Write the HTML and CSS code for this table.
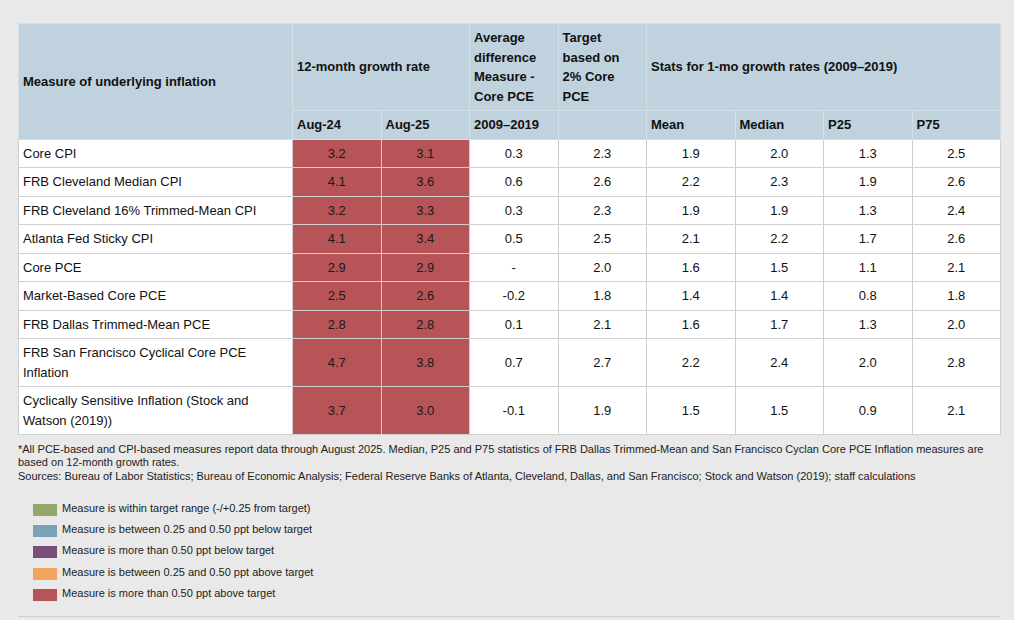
FILE: index.html
```html
<!DOCTYPE html>
<html>
<head>
<meta charset="utf-8">
<link rel="stylesheet" href="styles.css">
</head>
<body>
<div class="page">
  <table class="tbl">
    <colgroup>
      <col class="c-name">
      <col class="c-num"><col class="c-num"><col class="c-num"><col class="c-num">
      <col class="c-num"><col class="c-num"><col class="c-num"><col class="c-num">
    </colgroup>
    <thead>
      <tr>
        <th rowspan="2">Measure of underlying inflation</th>
        <th colspan="2">12-month growth rate</th>
        <th>Average difference Measure - Core PCE</th>
        <th>Target based on 2% Core PCE</th>
        <th colspan="4">Stats for 1-mo growth rates (2009–2019)</th>
      </tr>
      <tr>
        <th>Aug-24</th>
        <th>Aug-25</th>
        <th>2009–2019</th>
        <th></th>
        <th>Mean</th>
        <th>Median</th>
        <th>P25</th>
        <th>P75</th>
      </tr>
    </thead>
    <tbody>
      <tr><td>Core CPI</td><td class="red">3.2</td><td class="red">3.1</td><td>0.3</td><td>2.3</td><td>1.9</td><td>2.0</td><td>1.3</td><td>2.5</td></tr>
      <tr><td>FRB Cleveland Median CPI</td><td class="red">4.1</td><td class="red">3.6</td><td>0.6</td><td>2.6</td><td>2.2</td><td>2.3</td><td>1.9</td><td>2.6</td></tr>
      <tr><td>FRB Cleveland 16% Trimmed-Mean CPI</td><td class="red">3.2</td><td class="red">3.3</td><td>0.3</td><td>2.3</td><td>1.9</td><td>1.9</td><td>1.3</td><td>2.4</td></tr>
      <tr><td>Atlanta Fed Sticky CPI</td><td class="red">4.1</td><td class="red">3.4</td><td>0.5</td><td>2.5</td><td>2.1</td><td>2.2</td><td>1.7</td><td>2.6</td></tr>
      <tr><td>Core PCE</td><td class="red">2.9</td><td class="red">2.9</td><td>-</td><td>2.0</td><td>1.6</td><td>1.5</td><td>1.1</td><td>2.1</td></tr>
      <tr><td>Market-Based Core PCE</td><td class="red">2.5</td><td class="red">2.6</td><td>-0.2</td><td>1.8</td><td>1.4</td><td>1.4</td><td>0.8</td><td>1.8</td></tr>
      <tr><td>FRB Dallas Trimmed-Mean PCE</td><td class="red">2.8</td><td class="red">2.8</td><td>0.1</td><td>2.1</td><td>1.6</td><td>1.7</td><td>1.3</td><td>2.0</td></tr>
      <tr><td>FRB San Francisco Cyclical Core PCE Inflation</td><td class="red">4.7</td><td class="red">3.8</td><td>0.7</td><td>2.7</td><td>2.2</td><td>2.4</td><td>2.0</td><td>2.8</td></tr>
      <tr><td>Cyclically Sensitive Inflation (Stock and Watson (2019))</td><td class="red">3.7</td><td class="red">3.0</td><td>-0.1</td><td>1.9</td><td>1.5</td><td>1.5</td><td>0.9</td><td>2.1</td></tr>
    </tbody>
  </table>

  <div class="notes">
    <p>*All PCE-based and CPI-based measures report data through August 2025. Median, P25 and P75 statistics of FRB Dallas Trimmed-Mean and San Francisco Cyclan Core PCE Inflation measures are based on 12-month growth rates.</p>
    <p>Sources: Bureau of Labor Statistics; Bureau of Economic Analysis; Federal Reserve Banks of Atlanta, Cleveland, Dallas, and San Francisco; Stock and Watson (2019); staff calculations</p>
  </div>

  <ul class="legend">
    <li><span class="sw sw-green"></span><span>Measure is within target range (-/+0.25 from target)</span></li>
    <li><span class="sw sw-blue"></span><span>Measure is between 0.25 and 0.50 ppt below target</span></li>
    <li><span class="sw sw-purple"></span><span>Measure is more than 0.50 ppt below target</span></li>
    <li><span class="sw sw-orange"></span><span>Measure is between 0.25 and 0.50 ppt above target</span></li>
    <li><span class="sw sw-red"></span><span>Measure is more than 0.50 ppt above target</span></li>
  </ul>

  <div class="rule"></div>
</div>
</body>
</html>
```

FILE: styles.css
```css
html, body {
  margin: 0;
  padding: 0;
  background: #e9e9e9;
}

.page {
  padding: 23px 0 0 18px;
  width: 982px;
  font-family: "Liberation Sans", Arial, sans-serif;
}

.tbl {
  border-collapse: collapse;
  table-layout: fixed;
  width: 982px;
  font-size: 13px;
  line-height: 19.5px;
  color: #111;
  border: 1px solid #d2d2d2;
}

.c-name { width: 274px; }
.c-num { width: 88.5px; }

.tbl th {
  background: #bfd2dd;
  font-weight: bold;
  text-align: left;
  vertical-align: middle;
  padding: 4px 6px 4px 4px;
  border: 1px solid #d3dee5;
  color: #111;
}

.tbl td {
  background: #fff;
  padding: 4px;
  border: 1px solid #cfcfcf;
  text-align: center;
  vertical-align: middle;
}

.tbl td:first-child {
  text-align: left;
}

.tbl td.red {
  background: #b75457;
  color: #1a1a1a;
}

.notes {
  margin-top: 8px;
  font-size: 11px;
  line-height: 13.3px;
  color: #222;
}

.notes p {
  margin: 0;
}

.legend {
  list-style: none;
  margin: 19px 0 0 0;
  padding: 0 0 0 15px;
  font-size: 11px;
  line-height: 13px;
  color: #222;
}

.legend li {
  display: flex;
  align-items: flex-start;
  gap: 5px;
  height: 13px;
  margin-bottom: 8.3px;
}

.legend li:last-child {
  margin-bottom: 0;
}

.sw {
  display: block;
  width: 24px;
  height: 12px;
  margin-top: 2px;
  flex: none;
}

.sw-green { background: #93a86a; }
.sw-blue { background: #7ca2b7; }
.sw-purple { background: #7b5078; }
.sw-orange { background: #f2a45e; }
.sw-red { background: #b75457; }

.rule {
  margin-top: 16px;
  height: 1px;
  background: #cfcfcf;
}
```
